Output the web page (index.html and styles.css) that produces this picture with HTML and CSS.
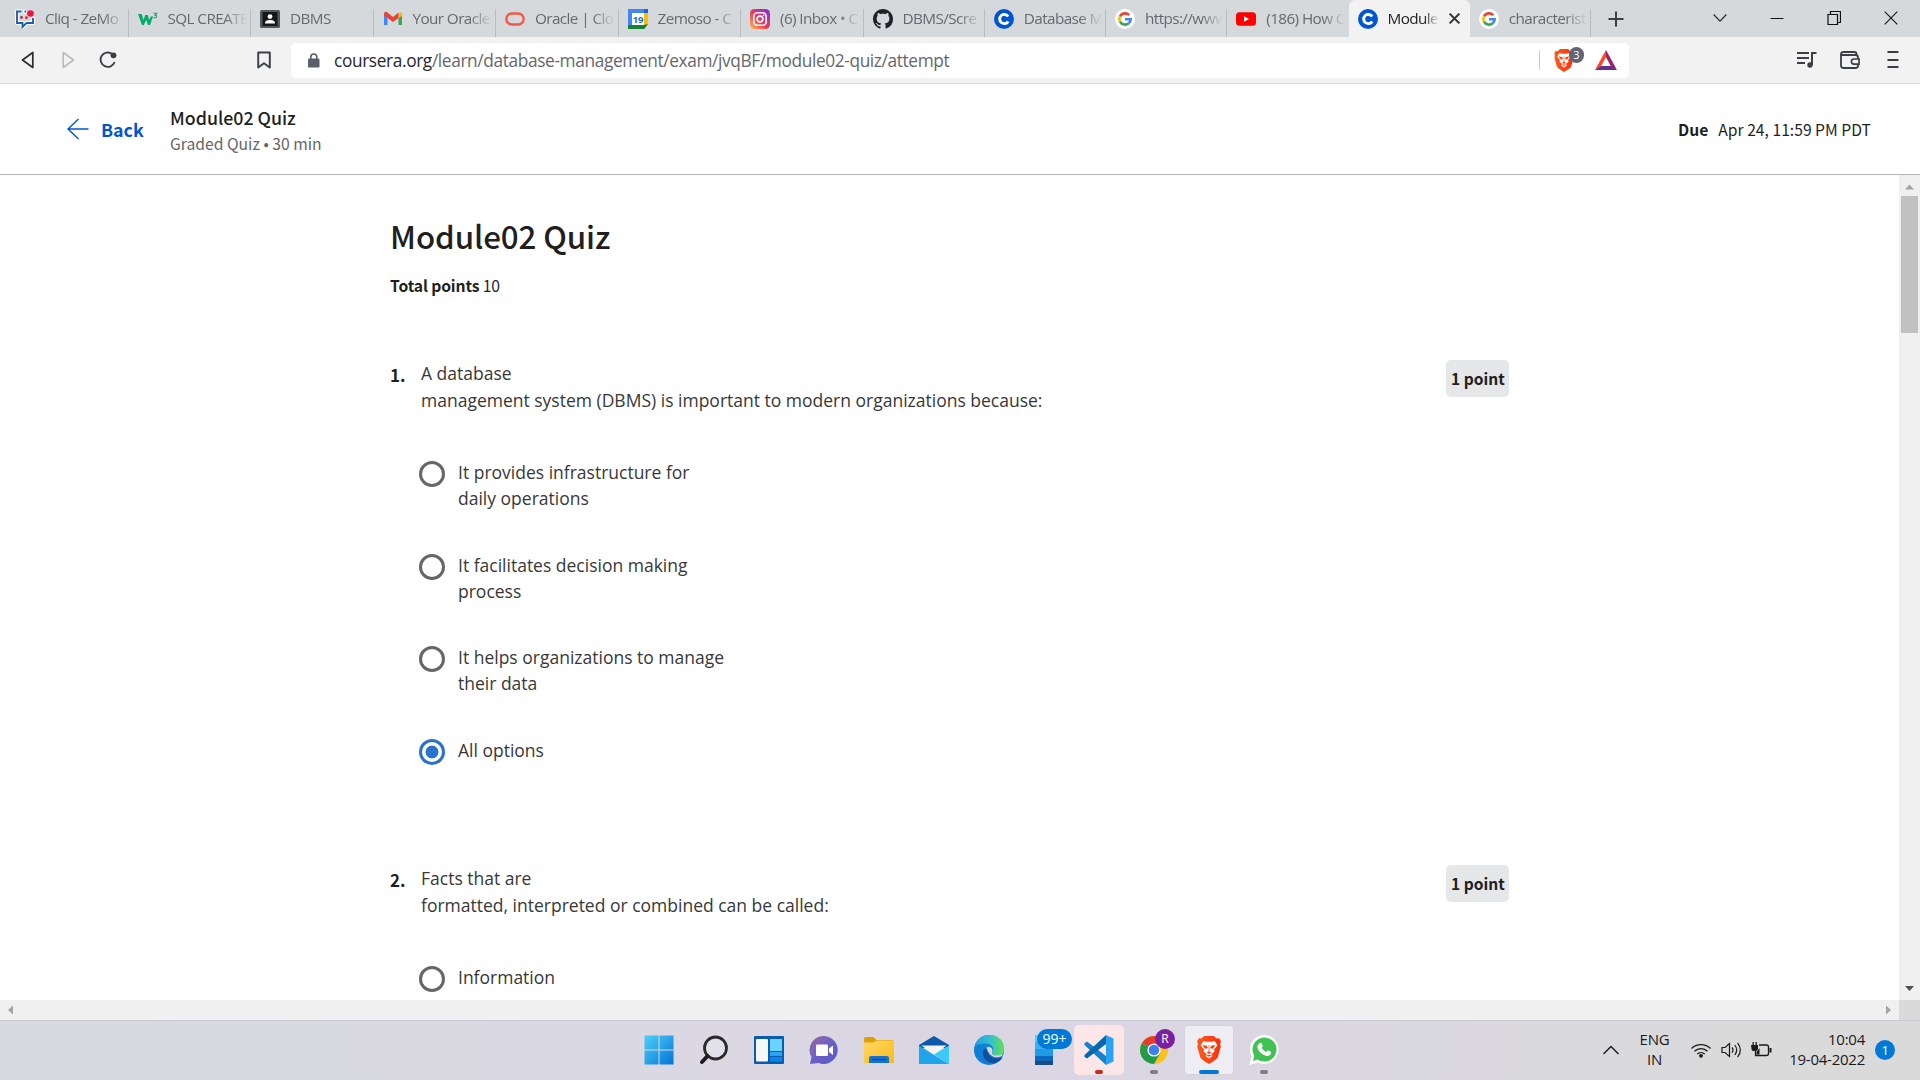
FILE: index.html
```html
<!DOCTYPE html>
<html lang="en">
<head>
<meta charset="utf-8">
<title>Module02 Quiz</title>
<link rel="stylesheet" href="styles.css">
</head>
<body>
<svg class="defs" width="0" height="0">
  <defs>
    <linearGradient id="insta" x1="0" y1="1" x2="1" y2="0"><stop offset="0" stop-color="#fdc04f"/><stop offset=".45" stop-color="#ee3a56"/><stop offset=".75" stop-color="#b92cb0"/><stop offset="1" stop-color="#5b3fe0"/></linearGradient>
    <linearGradient id="win" x1="0" y1="0" x2="1" y2="1"><stop offset="0" stop-color="#4fd0fb"/><stop offset="1" stop-color="#0074d4"/></linearGradient>
    <linearGradient id="chat" x1="0" y1="0" x2="1" y2="1"><stop offset="0" stop-color="#9a6a9e"/><stop offset=".5" stop-color="#6b60c8"/><stop offset="1" stop-color="#5558c8"/></linearGradient>
    <linearGradient id="fold" x1="0" y1="0" x2="1" y2="1"><stop offset="0" stop-color="#ffd968"/><stop offset="1" stop-color="#fcb916"/></linearGradient>
    <linearGradient id="edgeA" x1="0" y1="0" x2="1" y2="0"><stop offset="0" stop-color="#1f9fe0"/><stop offset=".55" stop-color="#35c1d0"/><stop offset="1" stop-color="#66e04a"/></linearGradient>
    <linearGradient id="lion" x1="0" y1="0" x2="1" y2="0"><stop offset="0" stop-color="#ff5a1c"/><stop offset="1" stop-color="#f9300b"/></linearGradient>
    <symbol id="coursera" viewBox="0 0 20 20"><circle cx="10" cy="10" r="10" fill="#0056d2"/><path d="M14.2 7.6A4.6 4.6 0 1 0 14.2 12.4" fill="none" stroke="#fff" stroke-width="2.9"/></symbol>
    <symbol id="google" viewBox="0 0 20 20"><circle cx="10" cy="10" r="10" fill="#fff"/><g fill="none" stroke-width="2.6"><path d="M14.2 6.2A5.7 5.7 0 0 0 5 7.3" stroke="#ea4335"/><path d="M5 7.3a5.7 5.7 0 0 0 0 5.4" stroke="#fbbc05"/><path d="M5 12.7a5.7 5.7 0 0 0 8.8 1.5" stroke="#34a853"/><path d="M13.8 14.2A5.7 5.7 0 0 0 15.7 10.2H10" stroke="#4285f4"/></g></symbol>
    <symbol id="brave" viewBox="0 0 24 28"><path d="M7 0h10l2.500 2.600 2.600-.4 1.900 3.200-1 2.600.8 2.400-3 10.600c-.6 2-4.600 4.600-8.800 7-4.200-2.400-8.200-5-8.800-7L.2 10.400 1 8 0 5.400 1.900 2.200l2.600.4z" fill="url(#lion)"/><path d="M6.500 5l2.500.8h6l2.500-.8 2.900 4.200-3.400 4.300.5 2-2.500 2-1-.5 1.500 3L12 22.500 8.500 20l1.500-3-1 .5-2.500-2 .5-2-3.400-4.300z" fill="#fff"/><path d="M6 9.200l3.800.9.8 2-2.600.5zM18 9.200l-3.800.9-.8 2 2.600.5zM12 9v6.500l-2 1 2 1.500 2-1.500-2-1zM9 19l3 1.500 3-1.500" fill="#f9400f" stroke="#f9400f" stroke-width=".4"/></symbol>
  </defs>
</svg>

<div class="tabstrip">
  <div class="tab"><svg class="fav" viewBox="0 0 20 20"><path d="M7 2.500H2v11.500h5.500v4l4-4H18V8M11 2.500H8" fill="none" stroke="#fff" stroke-width="4" stroke-linejoin="round"/><path d="M6.500 2.500H2v11.500h5.500v4l4-4H18V9M11 2.500H9.500" fill="none" stroke="#1f5fa8" stroke-width="1.900"/><circle cx="6.500" cy="8.500" r="1.400" fill="#d4202f"/><circle cx="11.500" cy="8.700" r="1.400" fill="#d4202f"/><circle cx="15.500" cy="4.500" r="3.300" fill="#f5103c"/></svg><span class="label">Cliq - ZeMo</span></div>
  <div class="tab"><svg class="fav" viewBox="0 0 20 20"><path d="M0 5h3.600l2 6 1.600-5h2.500l1.600 5 1.400-3.500h2.400L12 16h-2L8.200 11 5.800 16H4z" fill="#04aa6d"/><path d="M15.500 4.200h3.200l-1.700 2q2 .1 1.600 1.700-.6 1.200-3 .6" fill="none" stroke="#04aa6d" stroke-width="1.100"/></svg><span class="label">SQL CREATE</span></div>
  <div class="tab"><svg class="fav" viewBox="0 0 20 20"><rect y="1" width="20" height="18" rx="1.500" fill="#55585b"/><rect x="2.500" y="3" width="15" height="14" fill="#161718"/><circle cx="10" cy="7.600" r="2.400" fill="#fff"/><path d="M5 14.500c0-3 2.500-3.500 5-3.500s5 .5 5 3.500z" fill="#fff"/></svg><span class="label">DBMS</span></div>
  <div class="tab"><svg class="fav" viewBox="0 0 20 20"><path d="M1 5v11h3.500V9z" fill="#4285f4"/><path d="M19 5v11h-3.500V9z" fill="#34a853"/><path d="M15.500 4.500 19 3v3.500l-3.500 3z" fill="#fbbc04"/><path d="M1 4q1.500-2 3.500-.5L10 8l5.500-4.500V9L10 13 1 6.500z" fill="#ea4335"/></svg><span class="label">Your Oracle</span></div>
  <div class="tab"><svg class="fav" viewBox="0 0 20 20"><rect x="1.300" y="4.500" width="17.400" height="11" rx="5.500" fill="none" stroke="#f1594b" stroke-width="2.400"/></svg><span class="label">Oracle | Clo</span></div>
  <div class="tab"><svg class="fav" viewBox="0 0 20 20"><path d="M0 0h20v15l-4 5H0z" fill="#1967d2"/><path d="M16 4h4v12h-4z" fill="#fbbc04"/><path d="M0 16h16l4-1-4 5H0z" fill="#188038"/><path d="M4 4h12v12H4z" fill="#fff"/><path d="M0 0h16v4H4v12H0z" fill="#4285f4"/><text x="10" y="13.500" class="cal">19</text></svg><span class="label">Zemoso - C</span></div>
  <div class="tab"><svg class="fav" viewBox="0 0 20 20"><rect width="20" height="20" rx="4.500" fill="url(#insta)"/><rect x="3.800" y="3.800" width="12.400" height="12.400" rx="3.500" fill="none" stroke="#fff" stroke-width="1.600"/><circle cx="10" cy="10" r="2.900" fill="none" stroke="#fff" stroke-width="1.600"/><circle cx="13.700" cy="6.300" r=".9" fill="#fff"/></svg><span class="label">(6) Inbox • C</span></div>
  <div class="tab narrow"><svg class="fav" viewBox="0 0 16 16"><path fill="#1f2328" d="M8 0C3.580 0 0 3.580 0 8c0 3.540 2.290 6.530 5.470 7.590.4.070.55-.17.55-.38 0-.19-.01-.82-.01-1.490-2.010.37-2.530-.49-2.690-.94-.09-.23-.48-.94-.82-1.130-.28-.15-.68-.52-.01-.53.63-.01 1.080.58 1.230.82.72 1.210 1.870.87 2.330.66.070-.52.28-.87.51-1.070-1.780-.2-3.640-.89-3.640-3.950 0-.87.31-1.590.82-2.150-.08-.2-.36-1.020.08-2.120 0 0 .67-.21 2.200.82.64-.18 1.320-.27 2-.27s1.360.09 2 .27c1.530-1.040 2.200-.82 2.200-.82.44 1.100.16 1.920.08 2.120.51.56.82 1.270.82 2.150 0 3.070-1.870 3.750-3.650 3.950.29.25.54.73.54 1.480 0 1.070-.01 1.930-.01 2.200 0 .21.15.46.55.38A8.010 8.010 0 0 0 16 8c0-4.420-3.580-8-8-8z"/></svg><span class="label">DBMS/Scre</span></div>
  <div class="tab narrow"><svg class="fav"><use href="#coursera"/></svg><span class="label">Database M</span></div>
  <div class="tab narrow"><svg class="fav"><use href="#google"/></svg><span class="label">https://www</span></div>
  <div class="tab narrow nosep"><svg class="fav" viewBox="0 0 20 20"><rect y="3.200" width="20" height="13.600" rx="3.500" fill="#f00"/><path d="M8 7.200v5.600l5-2.800z" fill="#fff"/></svg><span class="label">(186) How C</span></div>
  <div class="tab narrow active"><svg class="fav"><use href="#coursera"/></svg><span class="label">Module</span><svg class="close" viewBox="0 0 12 12"><path d="M1.500 1.500l9 9M10.500 1.500l-9 9" stroke="#333" stroke-width="1.900"/></svg></div>
  <div class="tab narrow"><svg class="fav"><use href="#google"/></svg><span class="label">characterist</span></div>
  <svg class="newtab" viewBox="0 0 16 16"><path d="M8 .5v15M.5 8h15" stroke="#3b3e42" stroke-width="2"/></svg>
  <div class="winctl">
    <svg viewBox="0 0 14 14"><path d="M.7 3.500 7 10.200l6.300-6.700" fill="none" stroke="#222" stroke-width="1.100"/></svg>
    <svg viewBox="0 0 14 14"><path d="M.5 7.500h13" stroke="#111"/></svg>
    <svg viewBox="0 0 14 14"><path d="M1 3.500h9.500v10H1zM3.500 3.500v-3h10v11h-3" fill="none" stroke="#111" stroke-width="1.200"/></svg>
    <svg viewBox="0 0 14 14"><path d="M.7.700l12.600 12.600M13.300.7.700 13.300" stroke="#111" stroke-width="1.100"/></svg>
  </div>
</div>

<div class="toolbar">
  <svg class="nav" viewBox="0 0 18 18"><path d="M13.800 1.500v15L3.500 9z" fill="none" stroke="#2b2d30" stroke-width="1.700" stroke-linejoin="round"/></svg>
  <svg class="nav" viewBox="0 0 18 18"><path d="M4.200 1.500v15L14.500 9z" fill="none" stroke="#b9bbbd" stroke-width="1.600" stroke-linejoin="round"/></svg>
  <svg class="nav" viewBox="0 0 18 18"><path d="M13 2.800A7.200 7.200 0 1 0 15.600 11" fill="none" stroke="#3b3e42" stroke-width="1.900"/><circle cx="14.500" cy="4.300" r="2.900" fill="#3b3e42"/></svg>
  <svg class="nav bookmark" viewBox="0 0 18 18"><path d="M3.200 1.500h11.600v15L9 12.300l-5.800 4.200z" fill="none" stroke="#3b3e42" stroke-width="1.900" stroke-linejoin="round"/></svg>
  <div class="urlbar">
    <svg class="lock" viewBox="0 0 12 15"><rect y="5.500" width="11.500" height="9" rx="1.300" fill="#5a5e66"/><path d="M2.800 6V4a3 3 0 0 1 6 0v2" fill="none" stroke="#5a5e66" stroke-width="1.600"/></svg>
    <div class="url"><span class="host">coursera.org</span>/learn/database-management/exam/jvqBF/module02-quiz/attempt</div>
    <div class="urlsep"></div>
    <div class="shield"><svg viewBox="0 0 24 28"><use href="#brave"/></svg><span>3</span></div>
    <svg class="bat" viewBox="0 0 22 20"><path d="M11 0 0 20l6-3.600L11 7z" fill="#ff4724"/><path d="M11 0l11 20-6-3.600L11 7z" fill="#9e1f63"/><path d="M0 20h22l-6-3.900H6z" fill="#662d91"/></svg>
  </div>
  <div class="tools">
    <svg viewBox="0 0 20 20"><path d="M0 3h12M0 8h12M0 13h8" stroke="#3b3e42" stroke-width="1.900"/><path d="M15 15V3h4.500" fill="none" stroke="#3b3e42" stroke-width="2"/><circle cx="13" cy="15" r="2.700" fill="#3b3e42"/></svg>
    <svg viewBox="0 0 20 20"><path d="M16.500 5V4q0-2-2-2H3.500Q1 2 1 4.200v11.300Q1 18 3.500 18h12q2.500 0 2.500-2.500V7.500Q18 5 15.500 5H3.500Q1.500 5 1 4" fill="none" stroke="#3b3e42" stroke-width="1.800"/><path d="M19 9h-5a2.600 2.600 0 0 0 0 5.200h5z" fill="#f2f2f2" stroke="#3b3e42" stroke-width="1.700"/></svg>
    <svg class="menu" viewBox="0 0 20 20"><path d="M4.500 2h11M4.500 10h11M4.500 17h11" stroke="#3b3e42" stroke-width="1.900"/></svg>
  </div>
</div>

<header class="coursebar">
  <svg class="arrow" viewBox="0 0 22 22"><path d="M21.500 11H1M11.500 1 1 11l10.500 10" fill="none" stroke="#0056d2" stroke-width="1.400"/></svg>
  <span class="back">Back</span>
  <div class="crumbs"><div class="ctitle">Module02 Quiz</div><div class="cmeta">Graded Quiz • 30 min</div></div>
  <div class="due"><b>Due</b><span>Apr 24, 11:59 PM PDT</span></div>
</header>

<div class="viewport">
  <main class="page">
    <h1>Module02 Quiz</h1>
    <div class="total"><b>Total points</b> 10</div>
    <section class="question">
      <div class="num">1.</div>
      <div class="body">
        <div class="prompt">A database<br>management system (DBMS) is important to modern organizations because:</div>
        <div class="option"><i class="radio"></i><span>It provides infrastructure for<br>daily operations</span></div>
        <div class="option"><i class="radio"></i><span>It facilitates decision making<br>process</span></div>
        <div class="option"><i class="radio"></i><span>It helps organizations to manage<br>their data</span></div>
        <div class="option"><i class="radio on"></i><span>All options</span></div>
      </div>
      <div class="points">1 point</div>
    </section>
    <section class="question">
      <div class="num">2.</div>
      <div class="body">
        <div class="prompt">Facts that are<br>formatted, interpreted or combined can be called:</div>
        <div class="option"><i class="radio"></i><span>Information</span></div>
      </div>
      <div class="points">1 point</div>
    </section>
  </main>
  <div class="vscroll">
    <svg viewBox="0 0 21 21"><path d="M6 14.500h9L10.500 9.500z" fill="#a3a3a3"/></svg>
    <div class="thumb"></div>
    <svg class="down" viewBox="0 0 21 21"><path d="M6 7h9l-4.500 5z" fill="#505050"/></svg>
  </div>
</div>
<div class="hscroll">
  <svg viewBox="0 0 21 20"><path d="M13 5.500v9L8 10z" fill="#a3a3a3"/></svg>
  <svg class="right" viewBox="0 0 21 20"><path d="M8 5.500v9l5-4.500z" fill="#a3a3a3"/></svg>
  <div class="corner"></div>
</div>

<footer class="taskbar">
  <div class="apps">
    <div class="app"><svg viewBox="0 0 30 30"><path d="M.5.500h14v14H.5zM15.500.5h14v14h-14zM.5 15.500h14v14H.5zM15.500 15.500h14v14h-14z" fill="url(#win)"/></svg></div>
    <div class="app"><svg viewBox="0 0 30 30"><circle cx="16.500" cy="13" r="11" fill="#e2e0ea" stroke="#2a2a2a" stroke-width="2.800"/><path d="M8.500 21 3 27" stroke="#1d1d1d" stroke-width="4" stroke-linecap="round"/></svg></div>
    <div class="app"><svg viewBox="0 0 30 30"><rect y="1" width="30" height="28" rx="1" fill="#0c5cae"/><rect x="2" y="4" width="12" height="22.500" rx="1" fill="#f7f7f7"/><path d="M16 4h12v12H16z" fill="#69d5fd"/><path d="M16 17h12v4H16z" fill="#2aa4f4"/><path d="M16 22h12v4.500H16z" fill="#0b84ea"/></svg></div>
    <div class="app"><svg viewBox="0 0 30 30"><path d="M15 1a14 14 0 1 1-5.500 27L1 29l1.500-7A14 14 0 0 1 15 1z" fill="url(#chat)"/><rect x="7" y="9.500" width="12" height="11.500" rx="1.200" fill="#fff"/><path d="M20 13.500l4-3v9.500l-4-3z" fill="#fff"/></svg></div>
    <div class="app"><svg viewBox="0 0 30 30"><path d="M0 3.500Q0 2 1.500 2h8l3 3H29v3H0z" fill="#dfa00a"/><path d="M0 7.500h9.500L13 5.500h17V28H0z" fill="url(#fold)"/><path d="M5 28v-5q0-2 2-2h16q2 0 2 2v5z" fill="#1374cf"/><path d="M8 24.500h14" stroke="#07458c" stroke-width="1.200"/></svg></div>
    <div class="app"><svg viewBox="0 0 30 30"><path d="M0 10 15 1l15 9v3H0z" fill="#0c59ac"/><path d="M2.500 10.500h25L15 20z" fill="#f4f4f4"/><path d="M0 10.500l15 9.500 15 9H0z" fill="#1fa5ea"/><path d="M30 10.500 15 19.500 30 29z" fill="#39cbf9"/></svg></div>
    <div class="app"><svg viewBox="0 0 30 30"><circle cx="15" cy="15" r="15" fill="#0e7fd6"/><path d="M.5 12C3 3 9 0 15.500 0 25 0 30 6.500 30 13c0 4.500-3.500 7-7.500 7-3 0-5-1-4.500-2.500 3-4 0-9-7-9C6 8.500 2 10 .5 12z" fill="url(#edgeA)"/><path d="M9 16c-1 7 4 12 11 12.500 4-.8 7-3.500 8.500-6-9 3-15.500-1.500-14-7.500C12 13 9.500 13.500 9 16z" fill="#10509c"/><path d="M12.500 12.500a3.800 3.800 0 0 1 6 3c0 1.500-.8 2.200-.5 3.200q1.500 1.800 6 1.300 3-.8 5-3.500-.3 3.500-1 4.500-7 3-12-1.500-3-3.500-3.500-7z" fill="#d9d6e3"/><path d="M18 18.800q.7 1.400 5 1.200 5-.7 7-7v3l-1 3q-6 2.500-10 1z" fill="#59dc58"/></svg></div>
    <div class="app phone"><svg viewBox="0 0 30 30"><path d="M6 0h18v8H6z" fill="#4cd0f7"/><path d="M6 7h18v8H6z" fill="#38b5f0"/><path d="M6 14h18v7H6z" fill="#1e9de4"/><path d="M6 21h18v5H6z" fill="#0b68bd"/><path d="M6 26h18v4H6z" fill="#174c85"/></svg><span class="count">99+</span></div>
    <div class="app vs"><svg viewBox="0 0 30 30"><path d="M.3 8.300 3 6.500 22 21v9L.5 10z" fill="#1483cc"/><path d="M.3 21.700 3 23.500 22 9V0L.5 20z" fill="#0668ad"/><path d="M22 0l7.500 3.500v23L22 30z" fill="#2ba3f2"/></svg><i class="dot red"></i></div>
    <div class="app"><svg viewBox="0 0 30 30"><circle cx="15" cy="15" r="14" fill="#fbc01c"/><path d="M15 15 2.900 8A14 14 0 0 1 27.100 8z" fill="#e33b2e"/><path d="M15 15 2.900 8A14 14 0 0 0 15 29l6-10.500z" fill="#229a4c"/><circle cx="15" cy="15" r="6.600" fill="#fff"/><circle cx="15" cy="15" r="5.300" fill="#3a80ee"/></svg><span class="avatar">R</span><i class="dot"></i></div>
    <div class="app br"><svg viewBox="-3 -1 30 30"><use href="#brave" width="24" height="28"/></svg><i class="dot wide"></i></div>
    <div class="app"><svg viewBox="0 0 30 30"><path d="M15.500 0A14.500 14.500 0 1 1 8.800 27.600L.3 30 2.700 21.500A14.500 14.500 0 0 1 15.500 0z" fill="#fff"/><circle cx="15.500" cy="14.500" r="12" fill="#41c254"/><path d="M4 26l1.500-6 4 4.300z" fill="#41c254"/><path d="M10.500 8.200q1.500-1 2.300.3l1 2.600-1.200 1.700q1.600 3 4.500 4.200l1.700-1.800 3 1.500q.7.700 0 2.300-1.800 2.700-5 1.700-6-2-8.200-7.500-.6-3 1.900-5z" fill="#fff"/></svg><i class="dot"></i></div>
  </div>
  <div class="tray">
    <svg class="chev" viewBox="0 0 18 18"><path d="M1.500 13 9 5.500l7.500 7.500" fill="none" stroke="#1a1a1a" stroke-width="1.400"/></svg>
    <div class="lang">ENG<br>IN</div>
    <svg class="wifi" viewBox="0 0 20 16"><g fill="none" stroke="#1a1a1a" stroke-width="1.300"><path d="M.5 6.500a13.500 13.500 0 0 1 19 0"/><path d="M3.500 9.300a9.200 9.200 0 0 1 13 0"/><path d="M6.300 12a5.400 5.400 0 0 1 7.400 0"/></g><circle cx="10" cy="13.800" r="1.900" fill="#1a1a1a"/></svg>
    <svg class="vol" viewBox="0 0 21 18"><g fill="none" stroke="#1a1a1a" stroke-width="1.200"><path d="M1 6.500h3L8.500 2.500v13L4 11.500H1z"/><path d="M11 6.300q2 2.700 0 5.400M13.800 4q3.800 5 0 10M16.600 1.800q5.500 7.200 0 14.400"/></g></svg>
    <svg class="batt" viewBox="0 0 21 18"><path d="M8 4h7.500q2 0 2 2v6.500q0 2-2 2H4.500V10" fill="none" stroke="#1a1a1a" stroke-width="1.300"/><path d="M0 4h7v4q-.5 2-2.500 2h-2Q.5 10 .5 8zM1.500 1h1.300v3H1.500zM4.500 1h1.300v3H4.500zM18.500 7h2v4.500h-2zM5.500 11l3-4v6.500h-3z" fill="#1a1a1a"/></svg>
    <div class="clock">10:04<br>19-04-2022</div>
    <div class="notif">1</div>
  </div>
</footer>
</body>
</html>
```
FILE: styles.css
```css
* { box-sizing: border-box; }
body {
  margin: 0;
  width: 1920px;
  height: 1080px;
  overflow: hidden;
  display: flex;
  flex-direction: column;
  background: #fff;
  color: #1f1f1f;
  font-family: "Open Sans", "Noto Sans", sans-serif;
  white-space: nowrap;
}
.defs { position: absolute; }
svg { display: block; flex: none; }

/* Tab strip */
.tabstrip { display: flex; height: 37px; flex: none; background: #d5d9dc; padding-left: 6px; }
.tab {
  display: flex;
  align-items: center;
  width: 122.5px;
  flex: none;
  padding: 0 2px 0 9px;
  font-size: 15.3px;
  letter-spacing: -0.6px;
  color: #66696d;
  background: linear-gradient(#b9bdc0, #b9bdc0) right bottom / 1px 28px no-repeat;
}
.narrow { width: 121.25px; }
.fav { width: 20px; height: 20px; margin-right: 10px; overflow: visible; }
.label {
  flex: 1;
  overflow: hidden;
  line-height: 24px;
  padding-bottom: 2px;
  -webkit-mask-image: linear-gradient(to right, #000 70%, transparent 98%);
  mask-image: linear-gradient(to right, #000 70%, transparent 98%);
}
.tab.nosep { background: none; }
.tab.active { background: #f2f2f2; border-radius: 6px 6px 0 0; color: #222; padding-right: 9px; }
.close { width: 13px; height: 13px; margin-left: 8px; }
.cal { font: bold 9.5px "Open Sans", sans-serif; fill: #1967d2; text-anchor: middle; letter-spacing: -0.3px; }
.newtab { width: 16px; height: 16px; margin: 11px 0 0 17px; }
.winctl { display: flex; gap: 43px; margin-left: auto; padding: 11px 22px 0 0; }
.winctl svg { width: 14px; height: 14px; }

/* Toolbar */
.toolbar {
  display: flex;
  align-items: center;
  height: 47px;
  flex: none;
  background: #f2f2f2;
  border-bottom: 1px solid #d6d6d6;
  padding: 0 17px 0 19px;
}
.nav { width: 18px; height: 18px; margin-right: 22px; }
.bookmark { margin: 0 18px 0 116px; }
.urlbar {
  display: flex;
  align-items: center;
  width: 1338px;
  height: 35px;
  background: #fff;
  border-radius: 5px;
  padding: 0 12px 0 17px;
}
.lock { width: 12px; height: 15px; margin-right: 14px; }
.url { font-size: 17.3px; color: #65686c; line-height: 24px; flex: 1; letter-spacing: -0.37px; padding-top: 2px; }
.host { color: #26282b; }
.urlsep { width: 1px; height: 20px; background: #c8cacc; margin-right: 14px; }
.shield { position: relative; width: 41px; height: 22px; }
.shield svg { width: 20px; height: 23px; }
.shield span {
  position: absolute;
  left: 15px;
  top: -2px;
  width: 15px;
  height: 16px;
  border-radius: 8px;
  background: #636475;
  color: #fff;
  font-size: 11px;
  line-height: 16px;
  text-align: center;
}
.bat { width: 22px; height: 20px; }
.tools { display: flex; gap: 23px; margin-left: auto; }
.tools svg { width: 20px; height: 20px; }

/* Course header */
.coursebar {
  display: flex;
  align-items: center;
  height: 91px;
  flex: none;
  border-bottom: 1px solid #b5b5b5;
  padding: 0 49px 0 67px;
  font-family: "Noto Sans CJK JP", "Open Sans", sans-serif;
}
.arrow { width: 22px; height: 22px; margin-right: 12px; }
.back { font-size: 17.8px; font-weight: 700; color: #0056d2; width: 69px; line-height: 26px; }
.crumbs { padding-top: 2px; }
.ctitle { font-size: 17.8px; font-weight: 500; line-height: 27px; }
.cmeta { font-size: 15.7px; line-height: 26px; color: #666; }
.due { margin-left: auto; display: flex; gap: 10px; font-size: 15.7px; line-height: 26px; padding-top: 2px; }

/* Quiz page */
.viewport { display: flex; height: 825px; flex: none; overflow: hidden; }
.page { flex: 1; padding: 35px 0 0 390px; }
h1 { margin: 0; font: 500 31.3px/52px "Noto Sans CJK JP", sans-serif; letter-spacing: -0.1px; }
.total { font: 15.7px/26px "Noto Sans CJK JP", sans-serif; margin-top: 11px; letter-spacing: -0.12px; }
.question { display: flex; width: 1119px; height: 505px; margin-top: 61px; }
.question + .question { margin-top: 0; }
.num { width: 31px; font: 700 17px/26px "Noto Sans CJK JP", sans-serif; padding-top: 2px; }
.body { flex: 1; font-size: 17.5px; color: #383838; }
.prompt { line-height: 27px; height: 99px; }
.option { display: flex; height: 92.7px; line-height: 26px; gap: 12px; }
.radio { width: 26px; height: 26px; flex: none; border: 3px solid #666; border-radius: 50%; margin: 2px 0 0 -2px; }
.option span { padding-left: 1px; }
.on { border-color: #2a73cc; background: radial-gradient(circle, #2a73cc 6px, #fff 6.8px); }
.points {
  width: 63px;
  height: 37px;
  border-radius: 5px;
  background: #e5e7e8;
  font: 700 15.6px/37px "Noto Sans CJK JP", sans-serif;
  text-align: center;
  padding-left: 1px;
}

/* Scrollbars */
.vscroll { display: flex; flex-direction: column; align-items: center; width: 21px; background: #f0f0f0; }
.vscroll svg { width: 21px; height: 21px; }
.thumb { width: 17px; height: 137px; background: #c1c1c1; }
.vscroll .down { margin-top: auto; }
.hscroll { display: flex; height: 20px; flex: none; background: #f0f0f0; }
.hscroll svg { width: 21px; height: 20px; }
.hscroll .right { margin-left: auto; }
.corner { width: 21px; background: #dadada; }

/* Taskbar */
.taskbar {
  display: flex;
  height: 60px;
  flex: none;
  border-top: 1px solid #cbc9d2;
  background: linear-gradient(to right, #d8dadf 0, #dad8e3 35%, #dad6e3 60%, #dadadc 86%, #dadadb 100%);
  padding: 0 0 2px 631px;
}
.apps { display: flex; align-items: center; }
.app { position: relative; display: flex; align-items: center; justify-content: center; width: 55px; height: 50px; }
.app svg { width: 30px; height: 30px; }
.vs, .br { border-radius: 5px; width: 50px; margin: 0 2.5px; }
.vs { background: #fce6e8; }
.br { background: #eeedf3; box-shadow: 0 0 0 1px #d5d2dc inset; }
.dot { position: absolute; bottom: 1px; left: 50%; width: 8px; height: 4px; margin-left: -4px; border-radius: 2px; background: #7f7d85; }
.red { background: #c42b1c; }
.wide { width: 20px; margin-left: -10px; background: #0078d4; }
.count {
  position: absolute;
  left: 21px;
  top: 4px;
  width: 35px;
  height: 20px;
  border-radius: 10px;
  background: #0078d7;
  color: #fff;
  font-size: 14px;
  line-height: 20px;
  text-align: center;
  z-index: 1;
}
.avatar {
  position: absolute;
  left: 29px;
  top: 4px;
  width: 20px;
  height: 20px;
  border-radius: 50%;
  background: #7b1fa2;
  color: #fff;
  font-size: 12px;
  line-height: 20px;
  text-align: center;
}
.tray { display: flex; align-items: center; margin-left: auto; padding-right: 25px; font-size: 15px; line-height: 20px; letter-spacing: -0.25px; color: #1a1a1a; }
.chev { width: 18px; height: 18px; }
.lang { width: 70px; text-align: center; padding: 0 1px 2px 0; }
.wifi { width: 20px; height: 16px; margin: 0 10px 0 1px; }
.vol { width: 21px; height: 18px; margin-right: 9px; }
.batt { width: 21px; height: 18px; }
.clock { width: 93px; text-align: right; padding-bottom: 2px; }
.notif { width: 20px; height: 20px; margin-left: 10px; border-radius: 50%; background: #0078d7; color: #fff; text-align: center; font-size: 13px; }
```
